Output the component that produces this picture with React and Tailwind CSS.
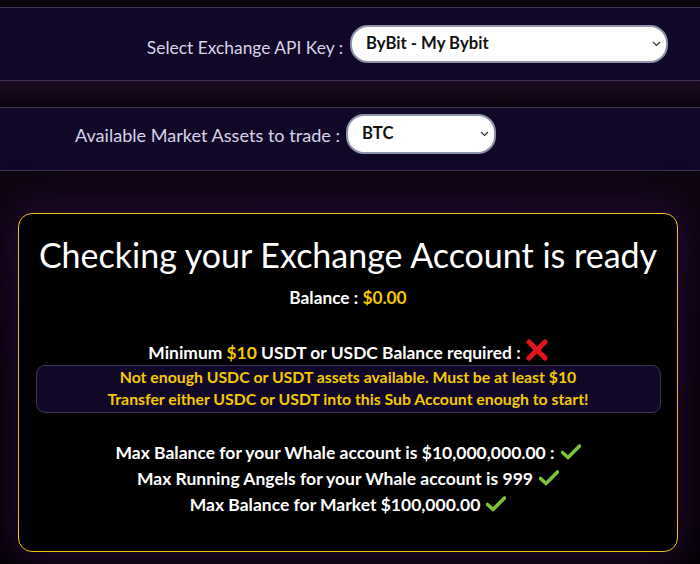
import React from "react";

const Chevron = () => (
    <svg width="9" height="6" viewBox="0 0 9 6" className="pointer-events-none absolute right-[7px] top-1/2 -translate-y-1/2">
        <path d="M1 1 L4.5 4.5 L8 1" fill="none" stroke="#333" strokeWidth="1.2" />
    </svg>
);

const Check = () => (
    <svg width="20" height="16" viewBox="0 0 20 16" className="inline-block align-[-1px] ml-[6px]">
        <path d="M1.5 8.5 L7 13.5 L18.5 2" fill="none" stroke="#7cc13a" strokeWidth="3.6" strokeLinecap="round" strokeLinejoin="round" />
    </svg>
);

const Cross = () => (
    <svg width="22" height="22" viewBox="0 0 22 22" className="inline-block align-[-2px] ml-[5px]">
        <path d="M3 3 L19 19 M19 3 L3 19" stroke="#e3151b" strokeWidth="5" strokeLinecap="round" />
    </svg>
);

const Select = ({ value, className }) => (
    <div className={`relative ${className}`}>
        <select
            defaultValue={value}
            className="w-full h-full appearance-none rounded-[18px] border-2 border-[#8d93aa] bg-white pl-[14px] text-[16.7px] font-bold text-[#111] outline-none"
        >
            <option>{value}</option>
        </select>
        <Chevron />
    </div>
);

export default function App() {
    return (
        <div className="min-h-screen bg-black font-['Lato',sans-serif] overflow-hidden">
            <div className="h-[7px] bg-[#09050b]" />

            <div className="h-[74px] border-y border-[#3d3352] bg-[#110828] flex items-center">
                <label className="w-[350px] text-right pr-[7px] pt-[9px] text-[17.4px] text-[#d6d3e6]">Select Exchange API Key :</label>
                <Select value="ByBit - My Bybit" className="w-[318px] h-[38px]" />
            </div>

            <div className="h-[26px] bg-gradient-to-b from-[#1c0b20] to-[#0b0510]" />

            <div className="h-[64px] border-y border-[#3d3352] bg-[#110828] flex items-start pt-[6px]">
                <label className="w-[346px] text-right pr-[6px] mt-[8px] text-[18.1px] text-[#d6d3e6]">Available Market Assets to trade :</label>
                <Select value="BTC" className="w-[150px] h-[40px]" />
            </div>

            <div className="bg-gradient-to-b from-[#0d0510] to-black pt-[42px] pb-[20px]">
                <div className="ml-[18px] w-[660px] h-[339px] rounded-[14px] border border-[#e8c40c] bg-black shadow-[0_0_40px_10px_rgba(60,15,80,0.55)] flex flex-col items-center text-white">
                    <h1 className="mt-[21px] text-[34px] leading-[40px]">Checking your Exchange Account is ready</h1>
                    <p className="mt-[11px] text-[17.3px] leading-[24px] font-bold">
                        Balance : <span className="text-[#f5c800]">$0.00</span>
                    </p>
                    <p className="mt-[29px] text-[17.4px] leading-[24px] font-bold">
                        Minimum <span className="text-[#f5c800]">$10</span> USDT or USDC Balance required :
                        <Cross />
                    </p>
                    <div className="mt-0 w-[625px] rounded-[9px] border border-[#3b3254] bg-[#110828] pb-[2px] text-center text-[15.8px] font-bold leading-[22px] text-[#f5c800]">
                        <p>Not enough USDC or USDT assets available. Must be at least $10</p>
                        <p>Transfer either USDC or USDT into this Sub Account enough to start!</p>
                    </div>
                    <div className="mt-[27px] text-[17.5px] font-bold leading-[26px] text-center">
                        <p>Max Balance for your Whale account is $10,000,000.00 :<Check /></p>
                        <p>Max Running Angels for your Whale account is 999<Check /></p>
                        <p>Max Balance for Market $100,000.00<Check /></p>
                    </div>
                </div>
            </div>
        </div>
    );
}
